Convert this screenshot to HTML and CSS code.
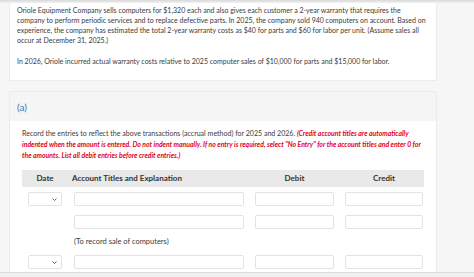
FILE: index.html
```html
<!DOCTYPE html>
<html lang="en">
<head>
    <meta charset="UTF-8">
    <meta name="viewport" content="width=device-width, initial-scale=1.0">
    <title>Warranty Entries</title>
    <link rel="stylesheet" href="styles.css">
</head>
<body>

<div class="topbar"></div>

<div class="page">
    <section class="card question">
        <p>Oriole Equipment Company sells computers for $1,320 each and also gives each customer a 2-year warranty that requires the company to perform periodic services and to replace defective parts. In 2025, the company sold 940 computers on account. Based on experience, the company has estimated the total 2-year warranty costs as $40 for parts and $60 for labor per unit. (Assume sales all occur at December 31, 2025.)</p>
        <p>In 2026, Oriole incurred actual warranty costs relative to 2025 computer sales of $10,000 for parts and $15,000 for labor.</p>
    </section>

    <section class="card part">
        <div class="part-head">(a)</div>
        <div class="part-body">
            <p class="instructions">Record the entries to reflect the above transactions (accrual method) for 2025 and 2026. <em>(Credit account titles are automatically indented when the amount is entered. Do not indent manually. If no entry is required, select "No Entry" for the account titles and enter 0 for the amounts. List all debit entries before credit entries.)</em></p>

            <div class="journal">
                <div class="journal-head">
                    <span class="col-date">Date</span>
                    <span class="col-account">Account Titles and Explanation</span>
                    <span class="col-num">Debit</span>
                    <span class="col-num">Credit</span>
                </div>

                <div class="row">
                    <div class="select"><svg width="5" height="3" viewBox="0 0 5 3"><path d="M0.5 0.5 L2.5 2.5 L4.5 0.5" fill="none" stroke="#555" stroke-width="0.9"/></svg></div>
                    <div class="field"></div>
                    <div class="field"></div>
                    <div class="field"></div>
                </div>
                <div class="row">
                    <div></div>
                    <div class="field"></div>
                    <div class="field"></div>
                    <div class="field"></div>
                </div>
                <div class="row memo">
                    <div></div>
                    <div class="memo-text">(To record sale of computers)</div>
                </div>
                <div class="row">
                    <div class="select"><svg width="5" height="3" viewBox="0 0 5 3"><path d="M0.5 0.5 L2.5 2.5 L4.5 0.5" fill="none" stroke="#555" stroke-width="0.9"/></svg></div>
                    <div class="field"></div>
                    <div class="field"></div>
                    <div class="field"></div>
                </div>
                <div class="row">
                    <div></div>
                    <div class="field"></div>
                    <div class="field"></div>
                    <div class="field"></div>
                </div>
            </div>
        </div>
    </section>
</div>

<div class="footer-bar"></div>

</body>
</html>
```

FILE: styles.css
```css
body {
    margin: 0;
    padding: 0;
    background: #f6f6f6;
    font-family: Lato, 'Open Sans', sans-serif;
    color: #3b3b3b;
    overflow: hidden;
}
.topbar {
    position: fixed;
    top: 0;
    left: 0;
    right: 0;
    height: 3px;
    background: linear-gradient(#d9d9d9, #f2f2f2);
}
.page {
    width: 428px;
    margin-left: 9px;
}
.card {
    background: #fff;
    border: 1px solid #ececec;
}
.question {
    border-top: none;
    padding: 5px 7px 3px 7px;
    font-size: 7px;
    line-height: 10px;
}
.question p {
    margin: 0 0 11px 0;
}
.part {
    margin-top: 10px;
}
.part-head {
    background: #f5f5f5;
    height: 29px;
    line-height: 30px;
    padding-left: 7px;
    color: #4478a6;
    font-size: 10px;
}
.part-body {
    padding: 7px 12px 0 12px;
}
.instructions {
    margin: 0 0 9px 0;
    font-size: 7.05px;
    line-height: 10px;
}
.instructions em {
    color: #e2001b;
    font-weight: bold;
    font-size: 6.85px;
}
.journal {
    width: 402px;
}
.journal-head,
.row {
    display: grid;
    grid-template-columns: 34px 171px 79px 78px;
    column-gap: 11px;
    padding-left: 6px;
}
.journal-head {
    background: #e9e9e9;
    height: 17px;
    line-height: 17px;
    font-size: 8px;
    font-weight: bold;
    color: #333;
    margin-bottom: 5px;
}
.journal-head .col-account {
    margin-left: -1px;
}
.col-date,
.col-num {
    text-align: center;
}
.row {
    height: 14px;
    margin-bottom: 9px;
}
.row > :nth-child(2) {
    margin-left: 1px;
}
.field,
.select {
    border: 1px solid #e3e3e3;
    border-radius: 2px;
    background: #fff;
    box-sizing: border-box;
    height: 14px;
}
.select {
    display: flex;
    align-items: center;
    justify-content: flex-end;
    padding-right: 4px;
}
.memo {
    height: 8px;
}
.memo-text {
    font-size: 7.5px;
    line-height: 8px;
    margin-left: -2px;
    white-space: nowrap;
}
.footer-bar {
    position: fixed;
    left: 0;
    right: 0;
    bottom: 0;
    height: 4px;
    background: #f1f1f1;
    border-top: 1px solid #dcdcdc;
}
```
